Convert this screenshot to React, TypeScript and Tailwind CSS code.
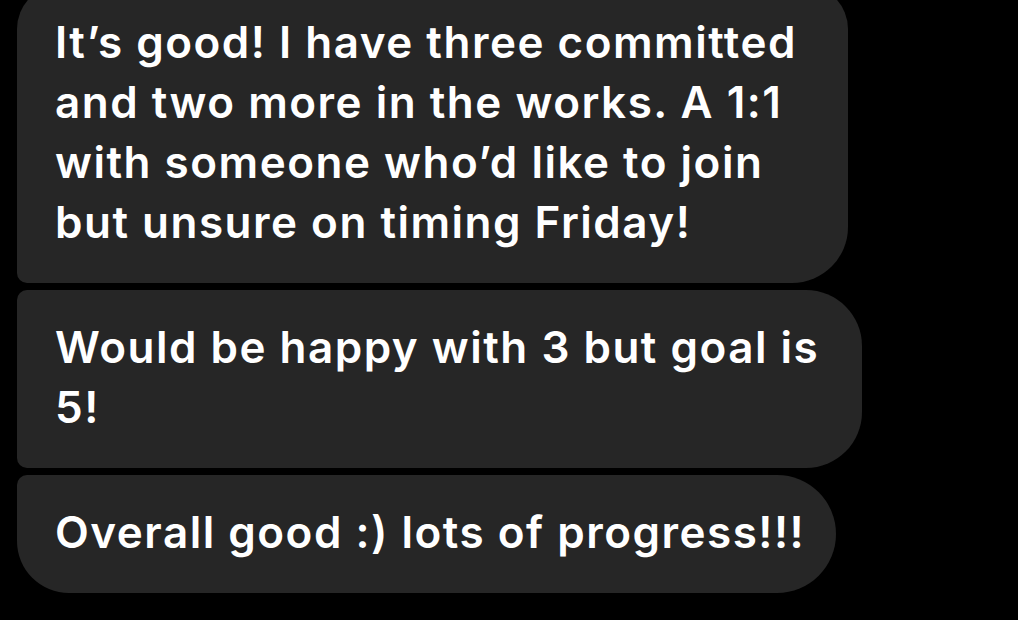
import React from "react";

const font = { fontFamily: "Inter, 'Noto Sans', sans-serif" };

export default function App() {
  return (
    <div className="w-[1018px] h-[620px] bg-black overflow-hidden">
      <div
        className="flex flex-col gap-[7px] pl-[17px] -mt-[15px] text-white text-[44px] leading-[60px] font-semibold tracking-[1.5px]"
        style={font}
      >
        <div className="w-[831px] bg-[#262626] pl-[38px] pt-[27px] pb-[31px] rounded-tl-[44px] rounded-tr-[44px] rounded-br-[56px] rounded-bl-[10px] whitespace-nowrap">
          <div>It’s good! I have three committed</div>
          <div>and two more in the works. A 1:1</div>
          <div>with someone who’d like to join</div>
          <div>but unsure on timing Friday!</div>
        </div>
        <div className="w-[845px] bg-[#262626] pl-[38px] pt-[27px] pb-[31px] rounded-tl-[10px] rounded-tr-[56px] rounded-br-[56px] rounded-bl-[10px] whitespace-nowrap">
          <div>Would be happy with 3 but goal is</div>
          <div>5!</div>
        </div>
        <div className="w-[819px] bg-[#262626] pl-[38px] pt-[27px] pb-[31px] rounded-tl-[10px] rounded-tr-[59px] rounded-br-[59px] rounded-bl-[52px] whitespace-nowrap">
          <div>Overall good :) lots of progress!!!</div>
        </div>
      </div>
    </div>
  );
}
